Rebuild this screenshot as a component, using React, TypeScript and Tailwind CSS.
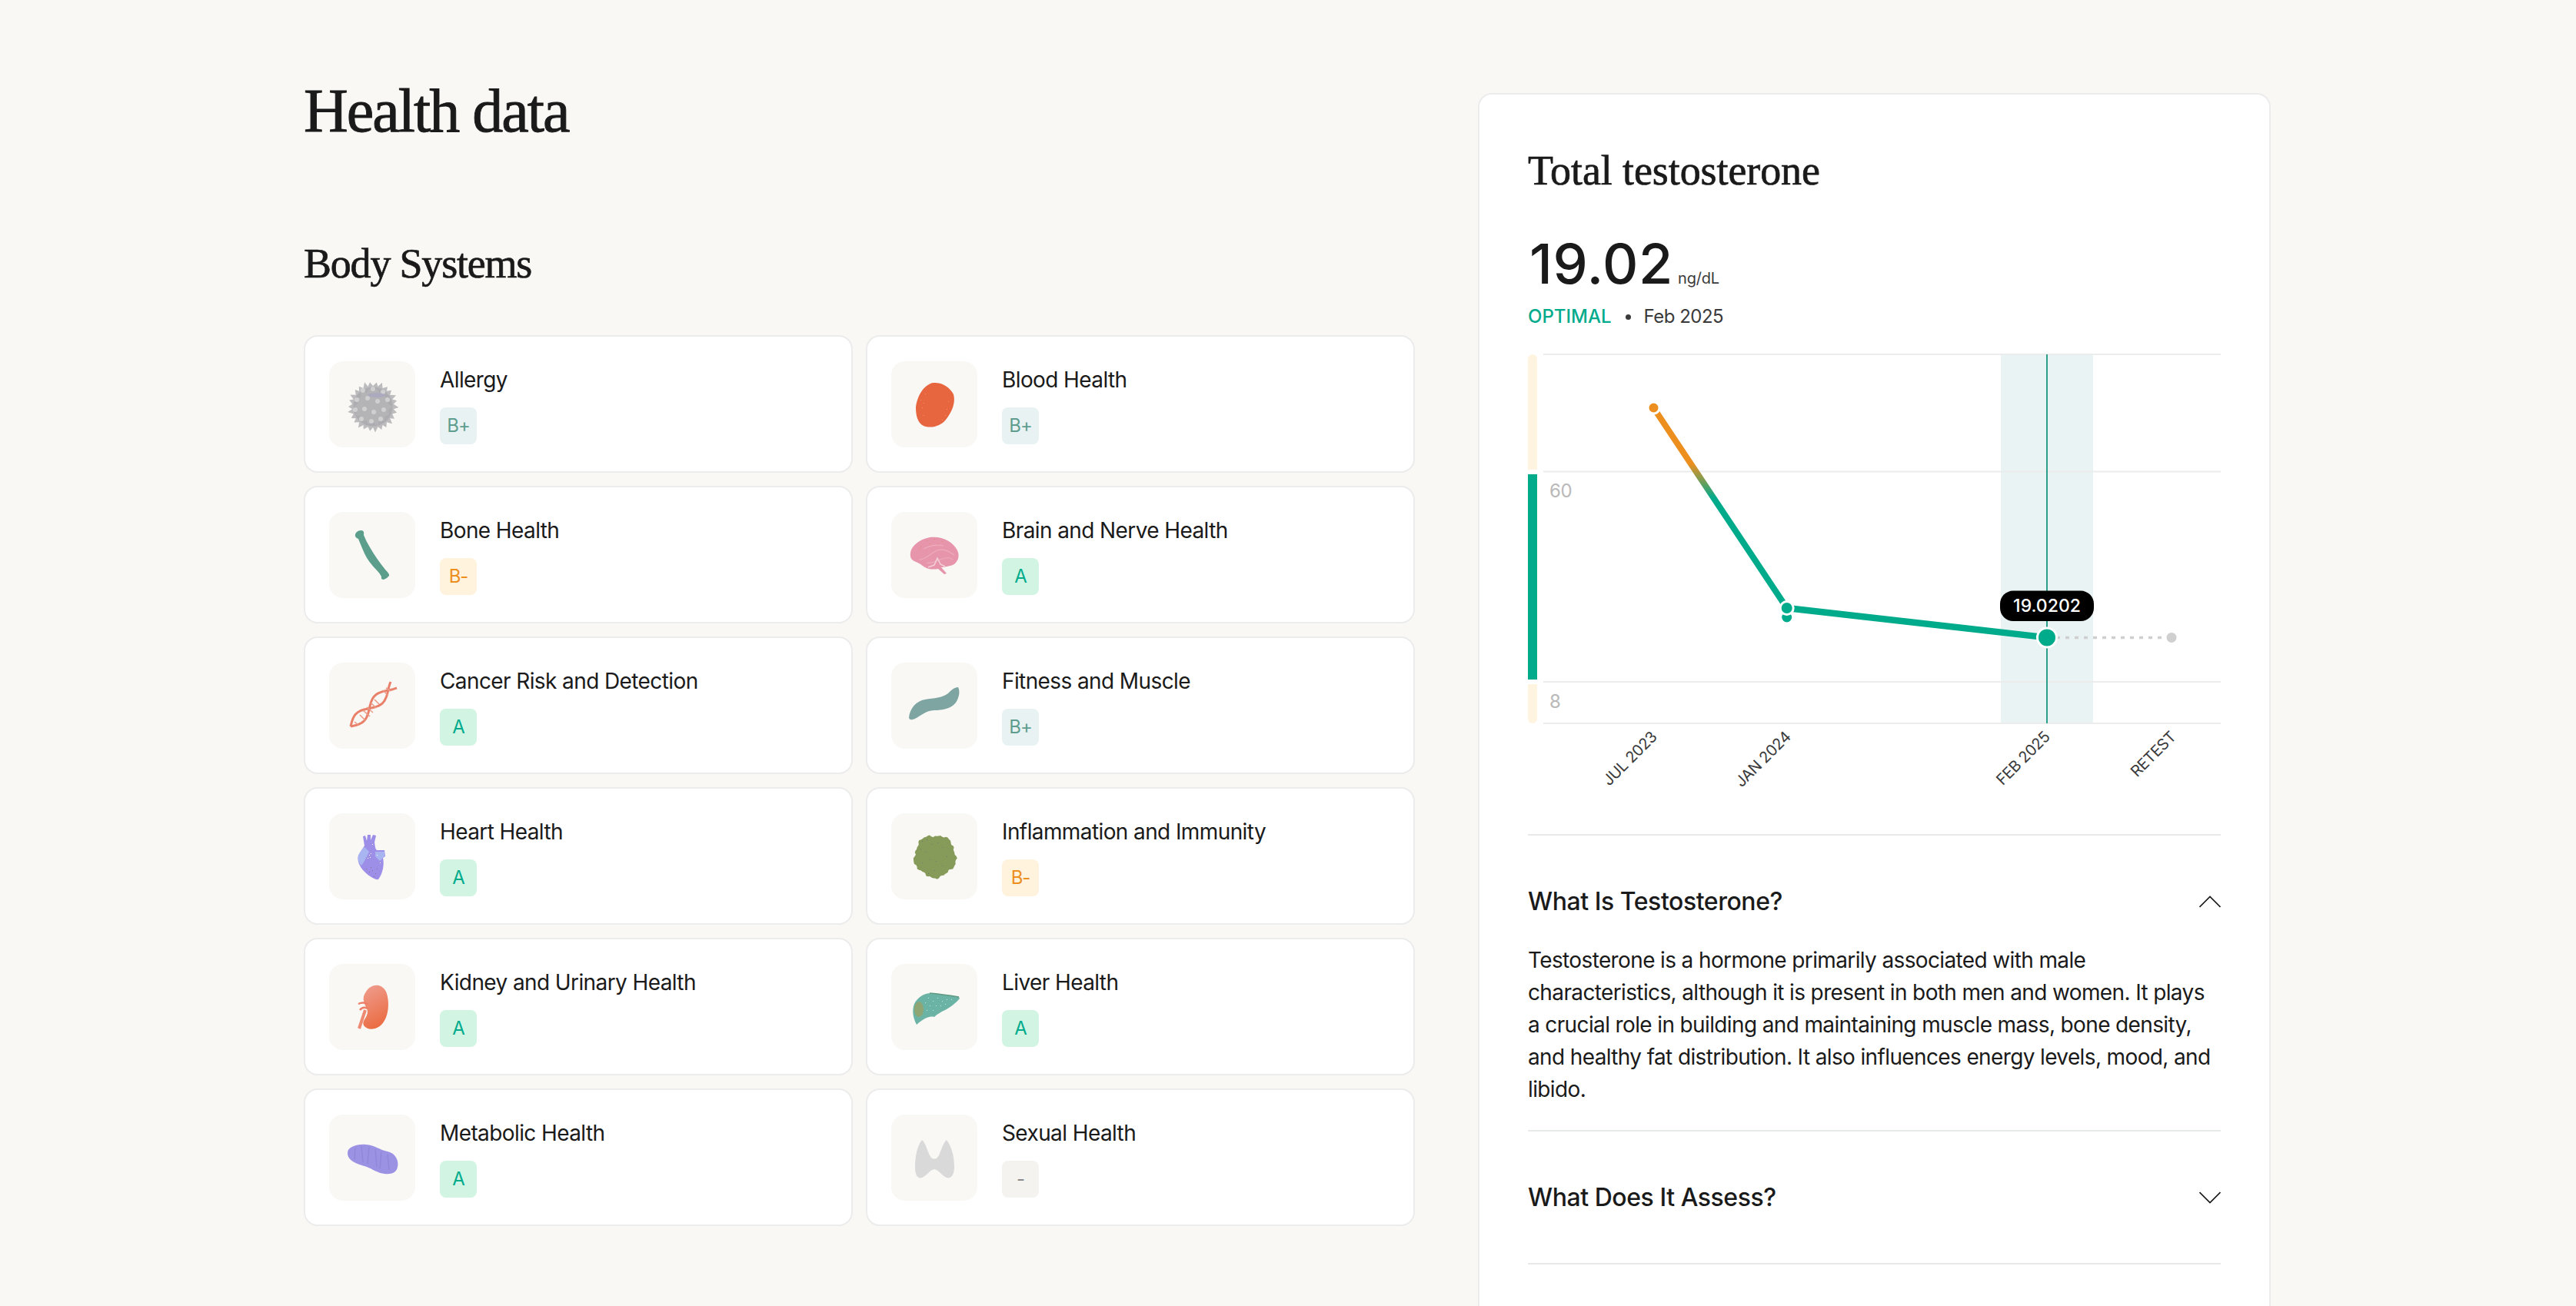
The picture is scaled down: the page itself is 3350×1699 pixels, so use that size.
const spikyPath = (cx: number, cy: number, r: number, spike: number, n: number) => {
  const pts: string[] = [];
  for (let i = 0; i < n * 2; i++) {
    const a = (i / (n * 2)) * Math.PI * 2 + (i % 4 === 0 ? 0.03 : 0);
    const d = i % 2 === 0 ? r + spike + (i % 6 === 0 ? 1.5 : 0) : r;
    pts.push(`${(cx + Math.cos(a) * d).toFixed(1)},${(cy + Math.sin(a) * d).toFixed(1)}`);
  }
  return `M${pts.join('L')}Z`;
};

const blobPath = (cx: number, cy: number, rx: number, ry: number) => {
  const pts: string[] = [];
  for (let i = 0; i < 72; i++) {
    const a = (i / 72) * Math.PI * 2;
    const k = 1 + 0.05 * Math.sin(a * 5) + 0.03 * Math.sin(a * 13 + 1) + 0.025 * Math.sin(a * 23);
    pts.push(`${(cx + Math.cos(a) * rx * k).toFixed(1)},${(cy + Math.sin(a) * ry * k).toFixed(1)}`);
  }
  return `M${pts.join('L')}Z`;
};

const helixPath = (phase: number) => {
  const pts: string[] = [];
  for (let i = 0; i <= 40; i++) {
    const t = i / 40;
    const ax = 28 + t * 56;
    const ay = 83 - t * 54;
    const off = 7 * Math.sin(t * Math.PI * 2.3 + phase);
    pts.push(`${(ax + off * 0.7).toFixed(1)},${(ay + off * 0.7).toFixed(1)}`);
  }
  return `M${pts.join('L')}`;
};

const dots = (list: number[][], fill: string) =>
  list.map(([x, y], i) => <rect key={i} x={x} y={y} width="1" height="1" fill={fill} />);

const Pollen = () => {
  const bumps = [
    [44, 38], [57, 36], [70, 40], [36, 50], [50, 48], [63, 52], [76, 50], [34, 63], [46, 62],
    [58, 66], [71, 63], [42, 75], [55, 78], [67, 75],
  ];
  return (
    <>
      <path d={spikyPath(57, 59, 27, 5, 26)} fill="#bcbbbd" />
      <circle cx="57" cy="59" r="25.5" fill="#adacb0" />
      <path d={spikyPath(57, 59, 20, 4, 14)} fill="#b9b8bb" opacity="0.6" />
      {bumps.map(([x, y], i) => (
        <circle key={i} cx={x} cy={y} r="3" fill="#d6d5d6" opacity="0.85" />
      ))}
      <ellipse cx="62" cy="44" rx="12" ry="3" fill="#a7a4c4" opacity="0.6" />
    </>
  );
};

const Blood = () => (
  <>
    <path
      d="M55 28C65 27 76 33 81 43C84 54 79 66 71 76C65 84 52 88 42 84C34 80 32 70 32 60C33 50 38 38 46 32C49 30 52 28 55 28Z"
      fill="#e8663f"
    />
    {dots([[38, 50], [40, 60], [44, 42], [42, 70], [74, 52], [72, 62], [70, 70], [66, 76], [42, 54]], '#f0935f')}
  </>
);

const Bone = () => (
  <path
    d="M34 29Q36 24 42 24Q46 24 45 30Q48 38 53 46Q61 60 73 75Q79 81 78 83Q75 87 71 88Q67 88 68 84Q66 80 63 77Q51 65 46 54Q42 45 38 35Q33 33 34 29Z"
    fill="#5a9e8b"
  />
);

const Brain = () => (
  <>
    <path
      d="M25 57C24 45 36 36 50 33C66 31 80 38 86 50C90 58 86 66 80 69C74 71 68 72 65 72L72 80L69 81L61 74C56 75 48 75 44 72C40 70 38 67 32 65C28 63 25 61 25 57Z"
      fill="#e695ab"
    />
    <path
      d="M36 62C46 62 50 54 60 50C68 47 76 52 82 56M42 48C50 44 60 42 68 44M46 66C54 68 60 62 70 60C74 59 78 60 80 62"
      fill="none"
      stroke="#eeacbc"
      strokeWidth="1.2"
    />
    <path d="M48 72L56 69L60 60L64 68L70 71" fill="none" stroke="#f2cfd8" strokeWidth="1.6" />
    {dots([[38, 44], [46, 37], [56, 35], [66, 38], [36, 47], [60, 41], [50, 41]], '#e2836f')}
  </>
);

const Dna = () => (
  <>
    <path d={helixPath(0)} fill="none" stroke="#e8806a" strokeWidth="3" />
    <path d={helixPath(Math.PI)} fill="none" stroke="#e8806a" strokeWidth="3" />
    <path
      d="M40 68L47 75M44 62L53 70M49 58L57 65M54 52L61 59M59 48L65 54M70 36L76 42M74 33L80 37M33 77L38 81"
      stroke="#eb9a86"
      strokeWidth="1.6"
    />
  </>
);

const Muscle = () => (
  <path
    d="M23 72C24 60 32 50 44 48C56 46 66 46 74 40C78 36 82 32 87 32C90 38 88 46 84 52C78 60 66 62 56 62C44 62 36 72 28 74Q24 75 23 72Z"
    fill="#7ea5a2"
  />
);

const Heart = () => (
  <>
    <path
      d="M44 30L47 29L49 36L50 28L54 28L54 35L57 28L61 29L59 38C60 44 60 46 62 48L72 48L73 56L70 58C72 66 70 78 64 86C60 87 52 82 46 76C40 70 36 62 38 55C40 50 44 46 46 42Z"
      fill="#9d8fe8"
    />
    <path d="M38 55C40 50 44 46 46 44L52 50L46 62L42 68C38 64 37 60 38 55Z" fill="#a9b5f0" />
    <path d="M60 50L72 50L72 56L66 62L60 56Z" fill="#a9b5f0" />
    {dots([[52, 54], [54, 52], [50, 58], [53, 57], [56, 40], [62, 54], [66, 64]], '#ffffff')}
    {dots([[48, 72], [52, 76], [56, 74], [60, 78], [58, 82], [62, 72], [54, 70]], '#8c6f8e')}
  </>
);

const Inflammation = () => (
  <>
    <path d={blobPath(57, 56, 27, 27.5)} fill="#869a5a" />
    {dots([[40, 36], [46, 34], [52, 40], [38, 46], [44, 50], [60, 38], [66, 44], [50, 60], [58, 62], [40, 64], [66, 68], [56, 74], [48, 78], [72, 56]], '#6f7a78')}
  </>
);

const Kidney = () => (
  <>
    <defs>
      <linearGradient id="kidneyFill" x1="0.3" y1="0" x2="0.6" y2="1">
        <stop offset="0" stopColor="#ef9a8a" />
        <stop offset="1" stopColor="#ea6a3f" />
      </linearGradient>
    </defs>
    <path
      d="M48 36C54 26 68 24 74 36C79 48 78 68 69 78C62 86 50 87 45 80C42 74 50 70 50 62C50 58 46 54 45 48C44 43 46 39 48 36Z"
      fill="url(#kidneyFill)"
    />
    <path d="M50 52C46 50 42 50 38 52M50 58C46 56 43 56 40 60" fill="none" stroke="#ee7d66" strokeWidth="2.5" />
    <path d="M47 60L39 84" fill="none" stroke="#ee8a72" strokeWidth="4" />
  </>
);

const Liver = () => (
  <>
    <path
      d="M33 79C28 70 27 60 30 52C34 44 42 38 52 38C62 39 76 41 88 43L89 45C84 51 76 57 70 60C64 63 60 65 56 69C52 68 48 69 44 71C40 73 36 76 33 79Z"
      fill="#6bb3a4"
    />
    <ellipse cx="36" cy="59" rx="6" ry="10" fill="#8fa574" />
    <path d="M50 38C62 39 76 41 88 43" fill="none" stroke="#5f9a82" strokeWidth="1.5" />
    {dots([[48, 44], [54, 48], [60, 44], [66, 48], [72, 46], [78, 46], [58, 54], [64, 54], [50, 54], [46, 60], [70, 52], [54, 60], [44, 50]], '#c4e3dc')}
  </>
);

const Mito = () => (
  <>
    <path
      d="M24 50C24 42 36 38 48 39C60 40 66 46 76 48C86 50 91 60 89 68C88 76 80 78 72 77C62 76 56 70 46 67C36 64 24 60 24 50Z"
      fill="#9c92e4"
    />
    <path d="M34 43L33 58M42 41L44 62M52 42L50 64M60 45L62 68M68 48L66 70M76 52L78 72" stroke="#8a7fd4" strokeWidth="1.4" opacity="0.6" />
  </>
);

const Thyroid = () => (
  <path
    d="M40 33C46 38 48 52 52 56C54 58 58 58 60 56C64 52 66 38 72 33C78 40 82 54 82 68C82 78 78 84 72 82C66 80 62 72 56 71C50 72 46 80 40 82C34 84 31 78 31 68C31 54 34 40 40 33Z"
    fill="#d9d9d9"
  />
);

const gradeStyles: Record<string, string> = {
  'B+': 'bg-[#e9f2f3] text-[#5f9e8e]',
  'B-': 'bg-[#fff3de] text-[#ec8f1f]',
  A: 'bg-[#d2f5e3] text-[#00ab8c]',
  '-': 'bg-[#f4f3f0] text-[#8a8a8a]',
};

const systems = [
  { name: 'Allergy', grade: 'B+', art: <Pollen /> },
  { name: 'Blood Health', grade: 'B+', art: <Blood /> },
  { name: 'Bone Health', grade: 'B-', art: <Bone /> },
  { name: 'Brain and Nerve Health', grade: 'A', art: <Brain /> },
  { name: 'Cancer Risk and Detection', grade: 'A', art: <Dna /> },
  { name: 'Fitness and Muscle', grade: 'B+', art: <Muscle /> },
  { name: 'Heart Health', grade: 'A', art: <Heart /> },
  { name: 'Inflammation and Immunity', grade: 'B-', art: <Inflammation /> },
  { name: 'Kidney and Urinary Health', grade: 'A', art: <Kidney /> },
  { name: 'Liver Health', grade: 'A', art: <Liver /> },
  { name: 'Metabolic Health', grade: 'A', art: <Mito /> },
  { name: 'Sexual Health', grade: '-', art: <Thyroid /> },
];

const SystemCard = ({ name, grade, art }: { name: string; grade: string; art: React.ReactNode }) => (
  <div className="flex h-[179px] items-center gap-[32px] rounded-[18px] border-2 border-[#ececec] bg-white px-[31px]">
    <div className="h-[112px] w-[112px] shrink-0 rounded-[18px] bg-[#f9f8f5]">
      <svg viewBox="0 0 112 112" className="h-full w-full">
        {art}
      </svg>
    </div>
    <div className="flex flex-col items-start gap-[16px]">
      <div className="text-[28px] leading-[40px] tracking-[-0.6px] text-[#1a1a1a]">{name}</div>
      <div className={`flex h-[48px] w-[48px] items-center justify-center rounded-[8px] text-[24px] tracking-[-1px] ${gradeStyles[grade]}`}>
        {grade}
      </div>
    </div>
  </div>
);

const Chart = () => (
  <svg viewBox="0 0 901 575" className="block h-[575px] w-[901px]" style={{ fontFamily: 'Inter, sans-serif' }}>
    <defs>
      <linearGradient id="trend" gradientUnits="userSpaceOnUse" x1="0" y1="148" x2="0" y2="193">
        <stop offset="0" stopColor="#ec8f1f" />
        <stop offset="1" stopColor="#00ab8c" />
      </linearGradient>
    </defs>
    <rect x="615" y="6" width="120" height="480" fill="#e9f3f4" />
    <path d="M20 6H901M20 158.5H901M20 432H901M20 486H901" stroke="#ececec" strokeWidth="2" fill="none" />
    <path d="M0 156V12A6 6 0 0 1 12 12V156Z" fill="#fff4df" />
    <rect x="0" y="162" width="12" height="267" fill="#00ab8c" />
    <path d="M0 435H12V480A6 6 0 0 1 0 480Z" fill="#fff4df" />
    <text x="28" y="192" fontSize="24" letterSpacing="-0.5" fill="#b9b9b9">60</text>
    <text x="28" y="466" fontSize="24" fill="#b9b9b9">8</text>
    <line x1="675" y1="6" x2="675" y2="486" stroke="#2aa08a" strokeWidth="2" />
    <line x1="675" y1="374.4" x2="837" y2="374.4" stroke="#cfcfcf" strokeWidth="3.5" strokeDasharray="5 7" />
    <path d="M163.5 75.6L336.7 336" fill="none" stroke="url(#trend)" strokeWidth="8" />
    <path d="M336.7 336L675 374.4" fill="none" stroke="#00ab8c" strokeWidth="8.5" />
    <circle cx="163.5" cy="75.6" r="7.5" fill="#ec8f1f" stroke="#ffffff" strokeWidth="3" />
    <circle cx="336.7" cy="348" r="8" fill="#00ab8c" stroke="#ffffff" strokeWidth="3" />
    <circle cx="336.7" cy="336" r="8.5" fill="#00ab8c" stroke="#ffffff" strokeWidth="3" />
    <circle cx="675" cy="374.4" r="12.5" fill="#00ab8c" stroke="#ffffff" strokeWidth="3" />
    <circle cx="837" cy="374.4" r="6.5" fill="#cfcfcf" />
    <rect x="614" y="313.6" width="122" height="39.5" rx="17" fill="#000000" />
    <text x="675" y="341" fontSize="23" fontWeight="500" fill="#ffffff" textAnchor="middle">19.0202</text>
    {[
      ['JUL 2023', 169],
      ['JAN 2024', 343],
      ['FEB 2025', 680],
      ['RETEST', 844],
    ].map(([label, x]) => (
      <text
        key={label}
        x={x}
        y="505"
        fontSize="20"
        letterSpacing="-0.4"
        fill="#3a3a3a"
        textAnchor="end"
        transform={`rotate(-45 ${x} 505)`}
      >
        {label}
      </text>
    ))}
  </svg>
);

const Chevron = ({ up }: { up?: boolean }) => (
  <svg viewBox="0 0 28 16" className="h-[16px] w-[28px]" fill="none" stroke="#1a1a1a" strokeWidth="1.7">
    <polyline points={up ? '0.5,15 14,1.5 27.5,15' : '0.5,1 14,14.5 27.5,1'} />
  </svg>
);

export default function App() {
  return (
    <div
      className="flex h-[1699px] items-start overflow-hidden bg-[#f9f8f5] pl-[395px] text-[#1a1a1a]"
      style={{ fontFamily: 'Inter, sans-serif' }}
    >
      <div className="w-[1445px] pt-[99px]">
        <h1 className="font-['Liberation_Serif',serif] text-[80px] leading-[90px] tracking-[-2px] [-webkit-text-stroke:0.9px_#1a1a1a]">
          Health data
        </h1>
        <h2 className="mt-[124px] font-['Liberation_Serif',serif] text-[54px] leading-[60px] tracking-[-1.2px] [-webkit-text-stroke:0.7px_#1a1a1a]">
          Body Systems
        </h2>
        <div className="mt-[63px] grid grid-cols-2 gap-x-[17px] gap-y-[17px]">
          {systems.map((s) => (
            <SystemCard key={s.name} {...s} />
          ))}
        </div>
      </div>

      <div className="ml-[82px] mt-[121px] h-[1700px] w-[1031px] shrink-0 rounded-[18px] border-2 border-[#ececec] bg-white px-[63px] pt-[69px]">
        <h2 className="font-['Liberation_Serif',serif] text-[54px] leading-[60px] tracking-[-0.1px] [-webkit-text-stroke:0.7px_#1a1a1a]">
          Total testosterone
        </h2>
        <div className="mt-[51px] flex items-baseline gap-[6px] pl-[2px]">
          <span className="text-[72px] font-medium leading-[80px] tracking-[0.6px]">19.02</span>
          <span className="text-[20px] tracking-[-0.2px] text-[#3a3a3a]">ng/dL</span>
        </div>
        <div className="mt-[13px] flex items-center text-[24px] leading-[32px]">
          <span className="font-medium text-[#00ab8c]">OPTIMAL</span>
          <span className="ml-[18px] h-[7px] w-[7px] rounded-full bg-[#3a3a3a]" />
          <span className="ml-[17px] tracking-[-0.5px] text-[#3a3a3a]">Feb 2025</span>
        </div>
        <div className="mt-[27px]">
          <Chart />
        </div>
        <div className="mt-[55px] border-t-2 border-[#e8eaea]">
          <div className="mt-[64px] flex h-[44px] items-center justify-between">
            <span className="text-[32px] font-medium tracking-[-0.45px]">What Is Testosterone?</span>
            <Chevron up />
          </div>
          <p className="mt-[33px] pb-[32px] text-[28px] leading-[42px] tracking-[-0.63px]">
            Testosterone is a hormone primarily associated with male characteristics, although it is present in both
            men and women. It plays a crucial role in building and maintaining muscle mass, bone density, and healthy
            fat distribution. It also influences energy levels, mood, and libido.
          </p>
        </div>
        <div className="border-t-2 border-[#e8eaea] pb-[63px] pt-[64px]">
          <div className="flex h-[44px] items-center justify-between">
            <span className="text-[32px] font-medium tracking-[-0.45px]">What Does It Assess?</span>
            <Chevron />
          </div>
        </div>
        <div className="border-t-2 border-[#e8eaea]" />
      </div>
    </div>
  );
}
